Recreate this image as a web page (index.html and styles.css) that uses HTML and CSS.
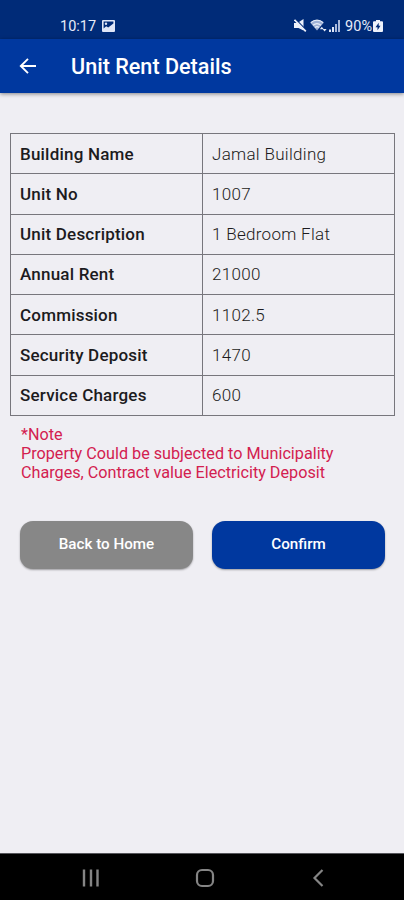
FILE: index.html
```html
<!DOCTYPE html>
<html lang="en">
<head>
    <meta charset="UTF-8">
    <meta name="viewport" content="width=device-width, initial-scale=1.0">
    <title>Unit Rent Details</title>
    <link rel="stylesheet" href="styles.css">
</head>
<body>

<div class="status-bar">
    <div class="status-left">
        <span class="clock">10:17</span>
        <svg class="picture-icon" width="13" height="12" viewBox="0 0 13 12">
            <path fill="#dfe6f7" fill-rule="evenodd" d="M1 0h11a1 1 0 0 1 1 1v10a1 1 0 0 1-1 1H1a1 1 0 0 1-1-1V1a1 1 0 0 1 1-1zM1.600 1.600v6.800l2.600-2.200 2 1.400 5.200-4V1.600z"/>
            <circle cx="4" cy="3.800" r="1.200" fill="#dfe6f7"/>
        </svg>
    </div>
    <div class="status-right">
        <svg class="mute-icon" width="13" height="13" viewBox="0 0 13 13">
            <path fill="#eef2fb" d="M0 4h3.500L9.500 0v11.500L4.500 9H0z"/>
            <path d="M1.500 0l11 11.500" stroke="#002b78" stroke-width="1.200"/>
            <path d="M.5 .8l11.300 11.500" stroke="#eef2fb" stroke-width="1.700"/>
        </svg>
        <svg class="wifi-icon" width="17" height="13" viewBox="0 0 17 13">
            <path fill="#9fb1d6" d="M7 11.500L.3 3.700C4.200 0 9.800 0 13.700 3.700z"/>
            <path fill="none" stroke="#e6ecf8" stroke-width="1.200" d="M.8 3.600c3.700-3.200 8.700-3.200 12.400 0M3 6.200c2.400-2 5.600-2 8 0M5 8.500c1.300-1 2.700-1 4 0"/>
            <path fill="#e6ecf8" d="M9.800 10.300l2-2.500 2 2.500zM12.600 10h4l-2 2.500z"/>
        </svg>
        <svg class="signal-icon" width="11" height="12" viewBox="0 0 11 12">
            <path fill="#dfe6f7" d="M0 9.500h2V12H0zM3 7h2v5H3z"/>
            <path fill="#a9b9db" d="M6 4h2v8H6zM9 0h2v12H9z"/>
        </svg>
        <span class="battery-text">90%</span>
        <svg class="battery-icon" width="10" height="12" viewBox="0 0 10 12">
            <path fill="#eef2fb" d="M3 0h4v1.300h2a1 1 0 0 1 1 1V11a1 1 0 0 1-1 1H1a1 1 0 0 1-1-1V2.300a1 1 0 0 1 1-1h2z"/>
            <path fill="#002b78" d="M5.700 2.700L2.500 7.200h2v3l3-4.500H5.700z"/>
        </svg>
    </div>
</div>

<header class="app-bar">
    <svg class="back-icon" width="18" height="18" viewBox="0 0 18 18">
        <path d="M17 9H2M9 1.800L1.800 9 9 16.200" fill="none" stroke="#fff" stroke-width="1.900"/>
    </svg>
    <h1>Unit Rent Details</h1>
</header>

<main class="content">
    <table class="details">
        <tr><th>Building Name</th><td>Jamal Building</td></tr>
        <tr><th>Unit No</th><td>1007</td></tr>
        <tr><th>Unit Description</th><td>1 Bedroom Flat</td></tr>
        <tr><th>Annual Rent</th><td>21000</td></tr>
        <tr><th>Commission</th><td>1102.5</td></tr>
        <tr><th>Security Deposit</th><td>1470</td></tr>
        <tr><th>Service Charges</th><td>600</td></tr>
    </table>

    <p class="note">*Note<br>Property Could be subjected to Municipality<br>Charges, Contract value Electricity Deposit</p>

    <div class="buttons">
        <button class="btn btn-back">Back to Home</button>
        <button class="btn btn-confirm">Confirm</button>
    </div>
</main>

<nav class="nav-bar">
    <svg width="18" height="18" viewBox="0 0 18 18">
        <path d="M2 .5v17M9 .5v17M15.500 .5v17" stroke="#858585" stroke-width="2.400"/>
    </svg>
    <svg width="20" height="20" viewBox="0 0 20 20">
        <rect x="2" y="2" width="16" height="16" rx="5" fill="none" stroke="#858585" stroke-width="2.200"/>
    </svg>
    <svg width="18" height="18" viewBox="0 0 18 18">
        <path d="M13.500 1L5.500 9l8 8" fill="none" stroke="#858585" stroke-width="2.200"/>
    </svg>
</nav>

</body>
</html>
```

FILE: styles.css
```css
* {
    box-sizing: border-box;
}
body {
    font-family: Roboto, sans-serif;
    display: flex;
    flex-direction: column;
    height: 100vh;
    margin: 0;
    background-color: #efeef3;
    color: #1c1b20;
    overflow: hidden;
}
svg {
    display: block;
    flex: none;
}

/* Status bar */
.status-bar {
    display: flex;
    justify-content: space-between;
    height: 39px;
    padding: 13px 21px 0 60px;
    background-color: #002b78;
    color: #e6ecf8;
    font-size: 14.500px;
    line-height: 26px;
}
.status-left,
.status-right {
    display: flex;
    align-items: center;
    height: 26px;
}
.clock,
.battery-text {
    padding-top: 1px;
}
.picture-icon {
    margin-left: 6px;
}
.mute-icon {
    margin-bottom: 2px;
}
.wifi-icon {
    margin-left: 3px;
    margin-bottom: 1px;
}
.signal-icon {
    margin-left: 2px;
}
.battery-text {
    margin-left: 5px;
}
.battery-icon {
    margin-left: 1px;
}

/* App bar */
.app-bar {
    display: flex;
    align-items: center;
    height: 54px;
    padding-left: 19px;
    background-color: #00389f;
    color: #fff;
    box-shadow: 0 1px 4px rgba(0, 0, 0, 0.45);
}
.app-bar h1 {
    margin: 0 0 0 34px;
    font-size: 21.600px;
    font-weight: 500;
}

/* Details table */
.content {
    flex: 1;
    padding: 40px 9px 0 10px;
}
.details {
    width: 100%;
    height: 283px;
    border-collapse: collapse;
    table-layout: fixed;
    font-size: 17px;
}
.details th,
.details td {
    padding: 0 9px;
    border: 1px solid #77767c;
    text-align: left;
}
.details th {
    font-weight: 500;
    letter-spacing: 0.2px;
}
.details td {
    font-weight: 300;
    letter-spacing: 0.3px;
}
.note {
    margin: 9px 0 0 11px;
    color: #d3204f;
    font-size: 16.200px;
    line-height: 19px;
}

/* Buttons */
.buttons {
    display: flex;
    gap: 19px;
    margin-top: 39px;
    padding: 0 10px;
}
.btn {
    flex: 1;
    height: 48px;
    padding: 0 0 2px;
    border: none;
    border-radius: 13px;
    color: #fff;
    font-family: inherit;
    font-size: 15.200px;
    font-weight: 500;
    box-shadow: 0 1px 2px rgba(0, 0, 0, 0.35);
}
.btn-back {
    background-color: #878787;
}
.btn-confirm {
    background-color: #00389f;
}

/* System navigation */
.nav-bar {
    display: flex;
    justify-content: space-between;
    align-items: center;
    height: 47px;
    padding: 1px 77px 0 82px;
    border-top: 1px solid #55555a;
    background-color: #000;
}
```
